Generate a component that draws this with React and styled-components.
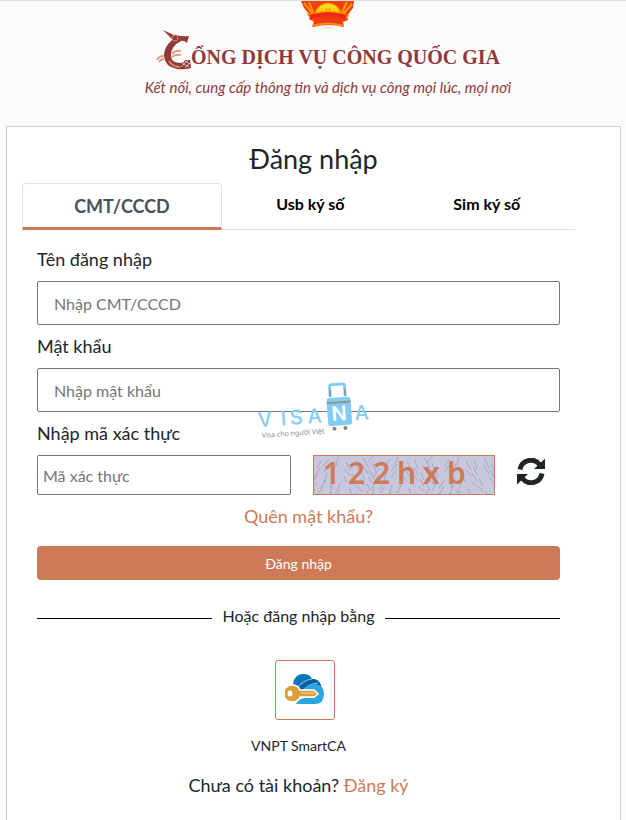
import React from 'react';
import styled, { createGlobalStyle } from 'styled-components';

const GlobalStyle = createGlobalStyle`
    * {
        box-sizing: border-box;
    }

    body {
        margin: 0;
        background: #fbfbfb;
        color: #212529;
        font-family: Lato, "Noto Sans", sans-serif;
        font-size: 18px;
        line-height: 27px;
    }

    button,
    input {
        font-family: inherit;
    }

    a {
        color: #ce7a58;
        text-decoration: none;
    }
`;

const Page = styled.div`
    display: flex;
    flex-direction: column;
    min-height: 100vh;
    border-top: 1px solid #e1e1e1;
`;

const Header = styled.header`
    display: flex;
    flex-direction: column;
    align-items: center;
    padding: 0 0 27px 30px;
    color: #903938;
`;

const Brand = styled.h1`
    display: flex;
    align-items: flex-end;
    margin: 0;
    font-family: "Liberation Serif", serif;
    font-size: 20px;
    font-weight: 700;
    line-height: 28px;
`;

const Tagline = styled.p`
    margin: 4px 0 0;
    font-size: 15px;
    font-style: italic;
    line-height: 24px;
`;

const Card = styled.main`
    position: relative;
    flex: 1;
    margin: 0 5px 0 6px;
    padding: 16px 45px 16px 15px;
    border: 1px solid #c8ced3;
    border-bottom: 0;
    background: #fff;
`;

const Title = styled.h2`
    margin: 0 -30px 8px 0;
    font-size: 27px;
    font-weight: 400;
    line-height: 32px;
    text-align: center;
`;

const Tabs = styled.div`
    display: flex;
    height: 47px;
    border-bottom: 1px solid #dee2e6;
`;

const Tab = styled.button`
    flex: ${props => (props.$active ? '0 0 200px' : '1')};
    height: ${props => (props.$active ? '47px' : '41px')};
    padding: 0;
    border: ${props => (props.$active ? '1px solid #dee2e6' : '0')};
    border-bottom: ${props => (props.$active ? '3px solid #ce7a58' : '0')};
    border-radius: 4px 4px 0 0;
    background: none;
    color: ${props => (props.$active ? '#495057' : '#000')};
    font-size: ${props => (props.$active ? '18px' : '16px')};
    font-weight: 700;
`;

const Form = styled.form`
    padding: 8px 15px 0;
`;

const Label = styled.label`
    display: block;
    padding: 8px 0;
`;

const Input = styled.input`
    display: block;
    width: 100%;
    height: ${props => (props.$compact ? '40px' : '44px')};
    padding: 0 ${props => (props.$compact ? '5px' : '16px')};
    border: 1px solid #767676;
    border-radius: 2px;
    background: #fff;
    font-size: 16px;

    &::placeholder {
        color: #757575;
    }
`;

const CaptchaRow = styled.div`
    display: grid;
    grid-template-columns: 254fr 182fr 43fr;
    column-gap: 22px;
    align-items: center;
`;

const Captcha = styled.div`
    position: relative;
    height: 40px;
    border: 1px solid #ce7a58;
    background: #c8c8dc;
`;

const Noise = styled.svg`
    display: block;
    width: 100%;
    height: 100%;
`;

const Code = styled.div`
    position: absolute;
    inset: 0;
    display: grid;
    grid-template-columns: repeat(6, 25px);
    padding-left: 5px;
    color: #ce7a58;
    font-family: "Noto Sans", sans-serif;
    font-size: 30px;
    font-weight: 600;
    line-height: 34px;
    text-align: center;
`;

const Refresh = styled.button`
    display: flex;
    padding: 0 0 8px;
    border: 0;
    background: none;
    color: #212529;
`;

const Centered = styled.p`
    margin: 8px 0 0;
    padding-left: ${props => (props.$indent ? '20px' : '0')};
    text-align: center;
`;

const Submit = styled.button`
    display: block;
    width: 100%;
    height: 34px;
    margin-top: 16px;
    border: 0;
    border-radius: 4px;
    background: #ce7a58;
    color: #fff;
    font-size: 14px;
`;

const Divider = styled.div`
    display: flex;
    align-items: center;
    gap: 10px;
    margin: 24px 0 32px;
    font-size: 16px;
    line-height: 24px;

    &::before,
    &::after {
        content: '';
        flex: 1;
        margin-top: 4px;
        border-top: 1px solid #000;
    }
`;

const Provider = styled.button`
    display: flex;
    flex-direction: column;
    align-items: center;
    gap: 16px;
    margin: 0 auto;
    padding: 0 0 8px;
    border: 0;
    background: none;
    color: #212529;
    font-size: 14px;
    line-height: 20px;
`;

const ProviderIcon = styled.span`
    display: flex;
    align-items: center;
    justify-content: center;
    width: 60px;
    height: 60px;
    margin-left: 12px;
    border: 1px solid #ce7a58;
    border-radius: 3px;
`;

const Watermark = styled.svg`
    position: absolute;
    top: 255px;
    left: calc(50% - 58px);
    pointer-events: none;
`;

const Emblem = () => (
    <svg width="54" height="28" viewBox="0 0 54 28" aria-hidden="true">
        <path d="M0 0h53l-1 7-6 8 1 4-5 2 1 5q-15-4-31 0l1-5-5-3 1-4-6-7z" fill="#f4400f" />
        <path d="M14 14a13 12 0 0 1 26 0q-13-5-26 0z" fill="#ffb800" />
        <path d="M18 12a9 8 0 0 1 18 0M22 11a5 5 0 0 1 10 0" fill="none" stroke="#ffe11a" strokeWidth="2" />
        <path d="M3 2l8 10M8 1l4 10M46 1l-5 10M51 3l-9 10M6 13l5 3M48 14l-6 3" stroke="#ff9a00" strokeWidth="2" />
        <path d="M8 14q19-6 38 0l-2 4q-17-5-34 0z" fill="#ee2a12" />
        <path d="M9 13q18-6 36 0M12 20q15-4 30 0" fill="none" stroke="#ffa000" />
        <path d="M13 18q14-3 28 0l1 7q-15-4-30 0z" fill="#f03a12" />
        <path d="M11 25q16-5 32 0" fill="none" stroke="#ff8a1a" strokeWidth="2" />
        <path d="M21 27q6-1 12 0" fill="none" stroke="#ffd9b5" />
    </svg>
);

const BirdLogo = () => (
    <svg width="35" height="42" viewBox="0 0 35 42" aria-hidden="true">
        <path d="M7 1l13 6-3 4z" fill="#903938" />
        <path d="M20 6q7 2 13 1l-2 7q-3-3-6-2-10 5-10 14 0 8 9 8 4 0 5-3h5l1 8q-5 2-14 1Q9 38 8 27 8 18 16 11z" fill="#903938" />
        <circle cx="19" cy="9" r="3" fill="#903938" stroke="#d98a67" />
        <path d="M13 32q4 6 11 6" fill="none" stroke="#d98a67" strokeWidth="2" />
        <path d="M26 34l7 4M29 32l5 3M25 38l7-7M29 39l5-5" stroke="#fbfbfb" strokeWidth=".7" />
        <path d="M1 31q2-4 7-4M3 33q2-3 5-3M16 25q3-4 9-3M16 28q4-3 9-2" fill="none" stroke="#dda083" strokeWidth="2" />
    </svg>
);

const RefreshIcon = () => (
    <svg width="28" height="27" viewBox="0 0 28 27" aria-hidden="true">
        <path d="M3 11.5A11 11 0 0 1 22.5 6.5M25 15.5A11 11 0 0 1 5.5 20.5" fill="none" stroke="currentColor" strokeWidth="5" />
        <path d="M28 .5V11H17zM0 26.500V16h11z" fill="currentColor" />
    </svg>
);

const SmartCaIcon = () => (
    <svg width="40" height="34" viewBox="0 0 40 34" aria-hidden="true">
        <path d="M9 16C6 7 12 1 18 1q7 0 9 5 6-1 9 6v6H9z" fill="#0876b9" />
        <path d="M14 17q6-10 13-11 7 0 9 7v6H14z" fill="#075f9c" />
        <path d="M12 15q6-8 15-9M18 17q5-6 15-7" fill="none" stroke="#8cc4e6" />
        <path d="M30 11q9 1 9 10 0 10-9 10H11q3-6 9-6h8q3 0 3-3t-3-4H18q4-7 12-7z" fill="#2ca5df" />
        <path d="M7 12q6 0 8 5h14l4 4-4 3H15q-2 5-8 5a8 8 0 0 1 0-17z" fill="#df9d37" stroke="#fff" strokeWidth="1.5" />
        <path d="M16 20h13" stroke="#fff" strokeOpacity=".6" />
        <path d="M19 16v2M22 16v2M25 16v2" stroke="#fff" />
        <ellipse cx="5" cy="20.500" rx="2.500" ry="3" fill="#fff" />
    </svg>
);

const VisanaMark = () => (
    <Watermark width="120" height="60" viewBox="0 0 120 60" aria-hidden="true">
        <g transform="rotate(-4 60 40)">
            <path d="M76 16V6q0-2 2-2h11q2 0 2 2v10" fill="none" stroke="#83cdf3" strokeWidth="3" />
            <path d="M76 9v7M91 9v7" stroke="#8f8f8f" strokeWidth="1.5" />
            <rect x="72" y="17" width="24" height="28" rx="3" fill="#83cdf3" />
            <path d="M72 22h24" stroke="#929292" strokeWidth="2" />
            <circle cx="78" cy="48" r="2" fill="#858585" />
            <circle cx="89" cy="48" r="2" fill="#858585" />
            <text x="2 25 34 52" y="41" fontFamily="Inter, sans-serif" fontSize="20" fontWeight="500" fill="#83cdf3">VISA</text>
            <text x="76" y="40" fontFamily="Inter, sans-serif" fontSize="20" fontWeight="600" fill="#fff">N</text>
            <text x="99" y="41" fontFamily="Inter, sans-serif" fontSize="20" fontWeight="500" fill="#83cdf3">A</text>
            <text x="5" y="52" fontFamily="Noto Sans, sans-serif" fontSize="7" fill="#8c8c8c">Visa cho người Việt</text>
        </g>
    </Watermark>
);

const strokes = Array.from({ length: 110 }, (_, i) => {
    const x = (i * 47) % 182;
    const y = (i * 23) % 40;
    const lean = Math.floor(x / 30) % 2 ? 3 : -6;
    return `M${x} ${y}l${lean + (i % 4)} ${6 + (i % 5)}`;
}).join('');

const fields = [
    { id: 'username', label: 'Tên đăng nhập', placeholder: 'Nhập CMT/CCCD', type: 'text' },
    { id: 'password', label: 'Mật khẩu', placeholder: 'Nhập mật khẩu', type: 'password' },
];

const tabs = ['CMT/CCCD', 'Usb ký số', 'Sim ký số'];

const App = () => {
    const [active, setActive] = React.useState(0);

    return (
        <Page>
            <GlobalStyle />
            <Header>
                <Emblem />
                <Brand>
                    <BirdLogo />
                    ỔNG DỊCH VỤ CÔNG QUỐC GIA
                </Brand>
                <Tagline>Kết nối, cung cấp thông tin và dịch vụ công mọi lúc, mọi nơi</Tagline>
            </Header>
            <Card>
                <Title>Đăng nhập</Title>
                <Tabs role="tablist">
                    {tabs.map((tab, i) => (
                        <Tab key={tab} type="button" role="tab" aria-selected={active === i} $active={active === i} onClick={() => setActive(i)}>
                            {tab}
                        </Tab>
                    ))}
                </Tabs>
                <Form onSubmit={e => e.preventDefault()}>
                    {fields.map(({ id, label, placeholder, type }) => (
                        <React.Fragment key={id}>
                            <Label htmlFor={id}>{label}</Label>
                            <Input id={id} type={type} placeholder={placeholder} />
                        </React.Fragment>
                    ))}
                    <Label htmlFor="captcha">Nhập mã xác thực</Label>
                    <CaptchaRow>
                        <Input id="captcha" type="text" placeholder="Mã xác thực" $compact />
                        <Captcha>
                            <Noise viewBox="0 0 182 38" preserveAspectRatio="none" aria-hidden="true">
                                <path d={strokes} stroke="#a4a4cb" fill="none" />
                            </Noise>
                            <Code>
                                {[...'122hxb'].map((char, i) => <span key={i}>{char}</span>)}
                            </Code>
                        </Captcha>
                        <Refresh type="button" aria-label="Đổi mã">
                            <RefreshIcon />
                        </Refresh>
                    </CaptchaRow>
                    <Centered $indent><a href="#forgot">Quên mật khẩu?</a></Centered>
                    <Submit type="submit">Đăng nhập</Submit>
                    <Divider>Hoặc đăng nhập bằng</Divider>
                    <Provider type="button">
                        <ProviderIcon><SmartCaIcon /></ProviderIcon>
                        VNPT SmartCA
                    </Provider>
                    <Centered>Chưa có tài khoản? <a href="#register">Đăng ký</a></Centered>
                </Form>
                <VisanaMark />
            </Card>
        </Page>
    );
};

export default App;
